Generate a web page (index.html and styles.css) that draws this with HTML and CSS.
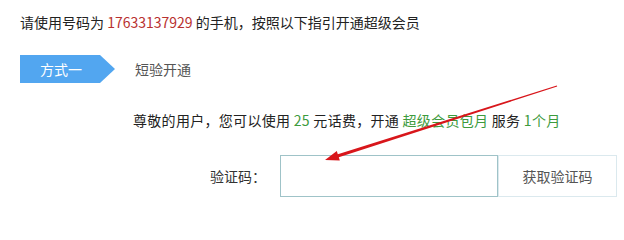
FILE: index.html
```html
<!DOCTYPE html>
<html lang="zh-CN">
<head>
<meta charset="utf-8">
<link rel="stylesheet" href="styles.css">
</head>
<body>
<div class="page">
  <p class="intro">请使用号码为 <span class="phone">17633137929</span> 的手机，按照以下指引开通超级会员</p>
  <div class="steps">
    <div class="tab">方式一</div>
    <div class="step-name">短验开通</div>
  </div>
  <p class="notice">尊敬的用户，您可以使用 <span class="hl">25</span> 元话费，开通 <span class="hl">超级会员包月</span> 服务 <span class="hl">1个月</span></p>
  <div class="form-row">
    <label class="label">验证码：</label>
    <input class="code-input" type="text">
    <button class="get-code">获取验证码</button>
  </div>
  <svg class="arrow" width="624" height="210" viewBox="0 0 624 210">
    <polygon points="557.2,86.5 338.8,157.2 339.8,160.5 325,160 336.8,151 337.8,154.3 556.8,85.5" fill="#d8161b"/>
  </svg>
</div>
</body>
</html>
```
FILE: styles.css
```css
html, body {
  margin: 0;
  padding: 0;
  background: #fff;
  overflow: hidden;
}
body {
  font-family: "Microsoft YaHei", "Noto Sans CJK SC", "Noto Sans", sans-serif;
  font-size: 14px;
  color: #333;
}
.page {
  position: relative;
  width: 624px;
  height: 210px;
  padding: 12px 0 0 20px;
  box-sizing: border-box;
}
.intro {
  margin: 0;
  line-height: 20px;
  color: #222;
}
.phone {
  color: #b8312f;
}
.steps {
  display: flex;
  align-items: center;
  margin-top: 23px;
  height: 28px;
}
.tab {
  flex: none;
  width: 95px;
  height: 28px;
  line-height: 28px;
  padding-left: 20px;
  box-sizing: border-box;
  background: #52a6f0;
  color: #fff;
  clip-path: polygon(0 0, 80px 0, 95px 50%, 80px 100%, 0 100%);
}
.step-name {
  margin-left: 20px;
  color: #555;
}
.notice {
  margin: 27px 0 0 113px;
  line-height: 20px;
  color: #222;
  letter-spacing: 0.3px;
}
.hl {
  color: #3d9b3d;
}
.form-row {
  display: flex;
  align-items: center;
  margin-top: 25px;
  height: 42px;
}
.label {
  flex: none;
  width: 260px;
  text-align: right;
  padding-right: 14px;
  box-sizing: border-box;
  color: #333;
}
.code-input {
  flex: none;
  width: 218px;
  height: 42px;
  box-sizing: border-box;
  border: 1px solid #9fc3c8;
  margin: 0;
  padding: 0 8px;
  outline: none;
}
.get-code {
  flex: none;
  width: 119px;
  height: 42px;
  box-sizing: border-box;
  border: 1px solid #dbe9ee;
  background: #fff;
  color: #555;
  font-family: inherit;
  font-size: 14px;
  margin: 0;
  padding: 0;
}
.arrow {
  position: absolute;
  left: 0;
  top: 0;
  pointer-events: none;
}
```
